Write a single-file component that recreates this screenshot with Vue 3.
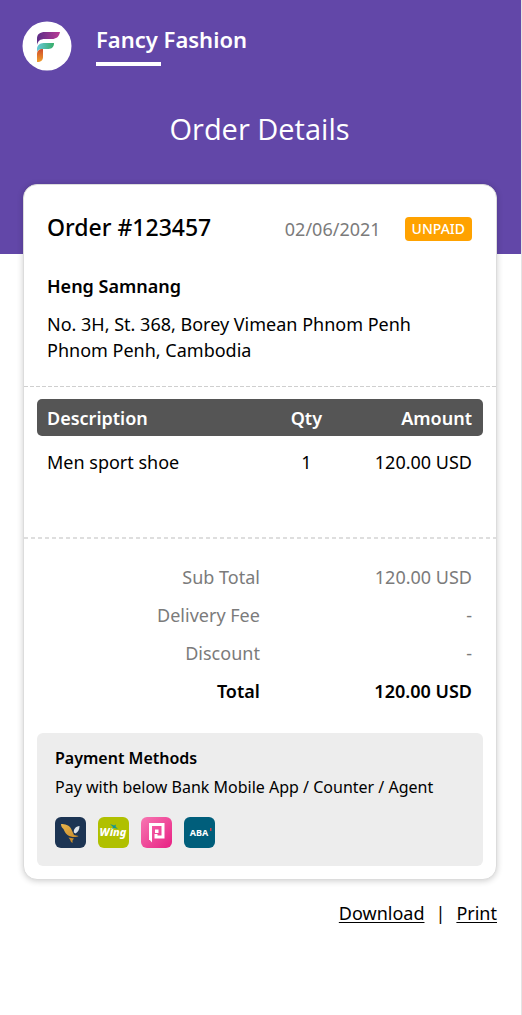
<script setup>
const shop = 'Fancy Fashion'
const order = { number: '123457', date: '02/06/2021', status: 'UNPAID' }
const items = [{ name: 'Men sport shoe', qty: 1, amount: '120.00 USD' }]
const totals = [
  { label: 'Sub Total', value: '120.00 USD' },
  { label: 'Delivery Fee', value: '-' },
  { label: 'Discount', value: '-' },
  { label: 'Total', value: '120.00 USD', strong: true },
]
</script>

<template>
  <div class="page">
    <header class="hero">
      <div class="brand">
        <svg class="logo" viewBox="0 0 50 50" role="img" aria-label="Fancy Fashion logo">
          <defs>
            <linearGradient id="top" x1="0" x2="1"><stop offset="0" stop-color="#5b2d87" /><stop offset="1" stop-color="#b93a94" /></linearGradient>
            <linearGradient id="mid" x1="0" x2="1"><stop offset="0" stop-color="#67c8d8" /><stop offset="1" stop-color="#36ad68" /></linearGradient>
            <linearGradient id="low" x1="0" x2="0" y1="0" y2="1"><stop offset="0" stop-color="#cf4b2b" /><stop offset="1" stop-color="#f0a02b" /></linearGradient>
          </defs>
          <circle cx="25" cy="25" r="24.5" fill="#fff" />
          <path d="M15 24V18C15 13 18 11 23 11H38C37 16 34 18 30 18H23C18 18 16 20 15 24Z" fill="url(#top)" />
          <path d="M15 31V27C16 23 19 22 23 22H32C32 27 29 28 25 28H21C17 28 16 29 15 31Z" fill="url(#mid)" />
          <path d="M15 41V33C15 30 17 28 21 28V36C21 39 19 41 15 41Z" fill="url(#low)" />
        </svg>
        <span class="name">{{ shop }}</span>
      </div>
      <h1>Order Details</h1>
    </header>

    <main class="card">
      <section class="summary">
        <div class="order-line">
          <h2>Order #{{ order.number }}</h2>
          <time datetime="2021-06-02">{{ order.date }}</time>
          <span class="badge">{{ order.status }}</span>
        </div>
        <h3>Heng Samnang</h3>
        <address>No. 3H, St. 368, Borey Vimean Phnom Penh<br>Phnom Penh, Cambodia</address>
      </section>

      <section class="lines">
        <table class="items">
          <thead>
            <tr><th scope="col">Description</th><th scope="col" class="qty">Qty</th><th scope="col" class="amount">Amount</th></tr>
          </thead>
          <tbody>
            <tr v-for="item in items" :key="item.name">
              <td>{{ item.name }}</td><td class="qty">{{ item.qty }}</td><td class="amount">{{ item.amount }}</td>
            </tr>
          </tbody>
        </table>
      </section>

      <section class="sums">
        <table class="totals">
          <tbody>
            <tr v-for="row in totals" :key="row.label" :class="{ strong: row.strong }">
              <th scope="row">{{ row.label }}</th><td>{{ row.value }}</td>
            </tr>
          </tbody>
        </table>
      </section>

      <section class="payment">
        <h4>Payment Methods</h4>
        <p>Pay with below Bank Mobile App / Counter / Agent</p>
        <div class="banks">
          <svg viewBox="0 0 31 31" role="img" aria-label="Bank app">
            <defs><linearGradient id="gold" x1="0" x2="1" y1="0" y2="1"><stop offset="0" stop-color="#e9b44c" /><stop offset="1" stop-color="#c98d2b" /></linearGradient></defs>
            <rect width="31" height="31" rx="6" fill="#1c3453" />
            <path d="M6 7C10 7 14 8 16 11.500L19 18L23.500 19C22 20.500 16 20.500 12.500 18C10 16 9.500 14 8.500 12C7 11 6 9 6 7Z" fill="url(#gold)" />
            <path d="M24.500 9C24.500 12 23.500 15 20.500 16.500L18.800 15.500C18.500 12 20.500 9.500 24.500 9Z" fill="#dfe5ec" />
            <path d="M13.500 20.500L19 21.500L17.500 23.500V26C15.800 25 15.500 24 15.300 23Z" fill="#c98d2b" />
          </svg>
          <svg viewBox="0 0 31 31" role="img" aria-label="Wing">
            <rect width="31" height="31" rx="6" fill="#b0c000" />
            <text x="15" y="19" class="wing">Wing</text>
            <path d="M12 7L16 8.500L18 7.500L17.500 9.500L20 12L16.500 11L14 12L15 10Z" fill="#17958f" />
          </svg>
          <svg viewBox="0 0 31 31" role="img" aria-label="Pi Pay">
            <defs><linearGradient id="pink" x1="0" x2="1" y1="0" y2="1"><stop offset="0" stop-color="#f777b2" /><stop offset="1" stop-color="#e81f83" /></linearGradient></defs>
            <rect width="31" height="31" rx="6" fill="url(#pink)" />
            <path d="M9.500 23V7.500H22V20H15V17" fill="none" stroke="#fff" stroke-width="3" />
            <path d="M8 22H11V25.500Z" fill="#fff" />
            <rect x="14" y="12.500" width="3.500" height="3.500" fill="#fff" />
          </svg>
          <svg viewBox="0 0 31 31" role="img" aria-label="ABA">
            <rect width="31" height="31" rx="6" fill="#005e7b" />
            <text x="15" y="19" class="aba">ABA</text>
            <rect x="26" y="11" width="1.500" height="3" fill="#c8434b" />
          </svg>
        </div>
      </section>
    </main>

    <nav class="actions">
      <a href="#download">Download</a><span>|</span><a href="#print">Print</a>
    </nav>
  </div>
</template>

<style>
body { margin: 0; background: #fff; }
</style>

<style scoped>
* { box-sizing: border-box; }
.page {
  min-height: 100vh;
  border-right: 1px solid #e4e4e4;
  font-family: "Noto Sans", "Open Sans", sans-serif;
  font-size: 18px;
  line-height: 26px;
  color: #000;
}
h1, h2, h3, h4, p { margin: 0; }
.hero { height: 254px; padding: 21px 24px 0 22px; background: #6247a8; color: #fff; }
.brand { display: flex; gap: 24px; }
.logo { width: 50px; height: 50px; }
.name { position: relative; height: 45px; font-size: 22px; line-height: 36px; font-weight: 600; }
.name::after { content: ""; position: absolute; left: 0; bottom: 0; width: 65px; height: 4px; background: #fff; }
h1 { margin-top: 38px; text-align: center; font-family: "Open Sans", sans-serif; font-size: 29px; line-height: 40px; font-weight: 400; }
.card {
  position: relative;
  margin: -70px 24px 0 23px;
  border: 1px solid #dcdcdc;
  border-radius: 14px;
  background: #fff;
  box-shadow: 0 1px 6px rgba(0, 0, 0, .2);
  padding-bottom: 13px;
}
.summary { padding: 25px 24px 23px 23px; }
.order-line { display: flex; align-items: center; }
h2 { flex: 1; font-size: 23px; line-height: 34px; font-weight: 500; }
time { margin-right: 24px; padding-top: 4px; color: #7b7b7b; }
.badge {
  margin-top: 4px;
  padding: 0 7px;
  border-radius: 4px;
  background: #ffa200;
  color: #fff;
  font-size: 14px;
  line-height: 24px;
  font-weight: 500;
}
h3 { margin: 29px 0 12px; font-size: 18px; line-height: 26px; font-weight: 600; }
address { font-style: normal; }
.lines { background: repeating-linear-gradient(90deg, #cfcfcf 0 4px, transparent 4px 6px) top / 100% 1px no-repeat; }
.sums { background: repeating-linear-gradient(90deg, #dedede 0 4px, transparent 4px 7px) top / 100% 2px no-repeat; }
.lines { min-height: 151px; padding: 13px 13px 0; }
table { width: 100%; border-collapse: separate; border-spacing: 0; table-layout: fixed; }
th, td { padding: 0 11px 0 10px; text-align: left; }
.items th { height: 37px; background: #555; color: #fff; font-weight: 600; }
.items th:first-child { width: 50%; border-radius: 5px 0 0 5px; }
.items th:last-child { border-radius: 0 5px 5px 0; }
.items td { height: 52px; }
.items .qty { width: 21%; text-align: center; }
.items .amount { text-align: right; }
.sums { padding: 21px 13px 23px; }
.totals th, .totals td { height: 38px; color: #7b7b7b; font-weight: 400; text-align: right; }
.totals th { width: 52%; padding-right: 9px; }
.totals .strong th, .totals .strong td { color: #000; font-weight: 600; }
.payment { margin: 0 13px; padding: 12px 18px 18px; border-radius: 6px; background: #ededed; font-size: 16px; }
h4 { font-size: 16px; line-height: 26px; font-weight: 600; }
.payment p { margin-top: 3px; }
.banks { display: flex; gap: 12px; margin-top: 17px; }
.banks svg { width: 31px; height: 31px; }
.wing { fill: #fff; font-size: 11px; font-weight: 800; font-style: italic; text-anchor: middle; }
.aba { fill: #fff; font-size: 9px; font-weight: 700; text-anchor: middle; }
.actions { display: flex; justify-content: flex-end; gap: 11px; padding: 20px 24px 0 0; }
a { color: #000; text-underline-offset: 2px; }
</style>
